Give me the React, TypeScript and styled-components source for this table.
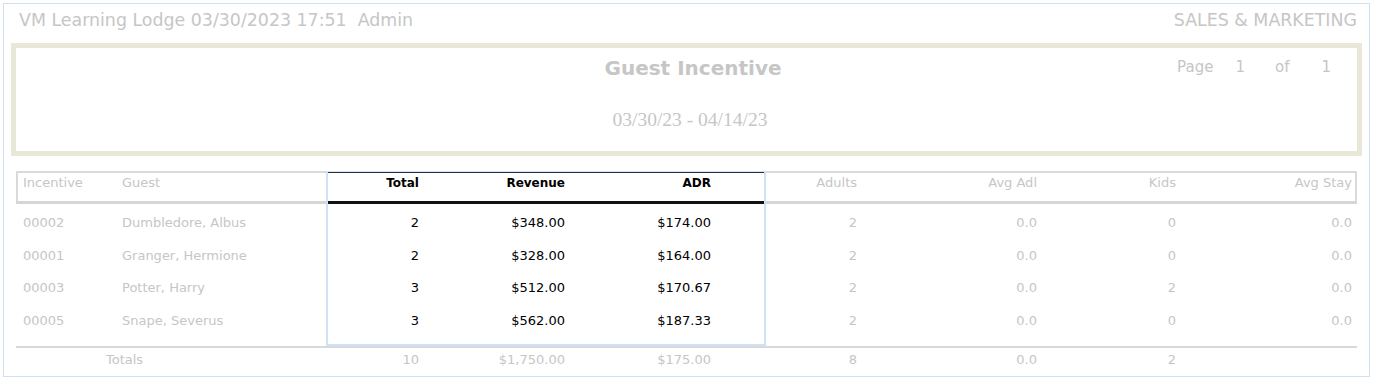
import React, { Fragment } from 'react';
import styled, { createGlobalStyle } from 'styled-components';

const GlobalStyle = createGlobalStyle`
  html, body {
    margin: 0;
    padding: 0;
    background: #ffffff;
  }
  body {
    font-family: "DejaVu Sans", Verdana, sans-serif;
  }
`;

const GRID = '99px 212px 146px 146px 146px 146px 180px 139px 1fr';
const GREY = '#c6c6c6';

type Align = 'left' | 'right';

type Column = {
  label: string;
  align: Align;
  hl?: boolean;
  pr?: number;
};

const columns: Column[] = [
  { label: 'Incentive', align: 'left' },
  { label: 'Guest', align: 'left' },
  { label: 'Total', align: 'right', hl: true },
  { label: 'Revenue', align: 'right', hl: true },
  { label: 'ADR', align: 'right', hl: true },
  { label: 'Adults', align: 'right' },
  { label: 'Avg Adl', align: 'right' },
  { label: 'Kids', align: 'right' },
  { label: 'Avg Stay', align: 'right', pr: 5 },
];

const rows: string[][] = [
  ['00002', 'Dumbledore, Albus', '2', '$348.00', '$174.00', '2', '0.0', '0', '0.0'],
  ['00001', 'Granger, Hermione', '2', '$328.00', '$164.00', '2', '0.0', '0', '0.0'],
  ['00003', 'Potter, Harry', '3', '$512.00', '$170.67', '2', '0.0', '2', '0.0'],
  ['00005', 'Snape, Severus', '3', '$562.00', '$187.33', '2', '0.0', '0', '0.0'],
];

const totals: string[] = ['10', '$1,750.00', '$175.00', '8', '0.0', '2', ''];

const Page = styled.div`
  margin: 3px;
  width: 1367px;
  height: 374px;
  box-sizing: border-box;
  border: 1px solid #cfe0f0;
  display: flex;
  flex-direction: column;
`;

const TopBar = styled.header`
  height: 39px;
  box-sizing: border-box;
  padding: 6px 12px 0 15px;
  display: flex;
  justify-content: space-between;
  align-items: flex-start;
  font-size: 17.4px;
  line-height: 20px;
  color: ${GREY};
  white-space: pre;
`;

const TitleBox = styled.section`
  margin: 0 7px;
  height: 113px;
  box-sizing: border-box;
  border: 5px solid #e9e7d7;
  display: grid;
  grid-template-columns: 527px 300px 1fr;
`;

const TitleBlock = styled.div`
  grid-column: 2;
  display: flex;
  flex-direction: column;
  align-items: center;
  padding-top: 8px;
  gap: 28px;
`;

const Title = styled.h1`
  margin: 0;
  font-size: 20px;
  line-height: 24px;
  font-weight: bold;
  color: ${GREY};
  white-space: nowrap;
`;

const Range = styled.div`
  font-family: "Liberation Serif", "Times New Roman", serif;
  font-size: 19.5px;
  line-height: 24px;
  color: ${GREY};
  white-space: nowrap;
  margin-left: -6px;
`;

const PageCount = styled.div`
  grid-column: 3;
  justify-self: end;
  display: flex;
  align-items: flex-start;
  padding: 9px 26px 0 0;
  font-size: 15px;
  line-height: 20px;
  color: ${GREY};
`;

const PageWord = styled.span<{ $gap: number }>`
  margin-left: ${p => p.$gap}px;
`;

const Table = styled.section`
  position: relative;
  margin: 15px 12px 0;
`;

const Row = styled.div<{ $head?: boolean }>`
  display: grid;
  grid-template-columns: ${GRID};
  height: ${p => (p.$head ? '33px' : '32.5px')};
  box-shadow: ${p => (p.$head ? 'inset 2px 2px 0 #dadada, inset -2px 0 0 #dadada' : 'none')};
`;

const Body = styled.div`
  padding: 3px 0 9px;
`;

const Cell = styled.div<{ $align: Align; $hl?: boolean; $pr?: number }>`
  display: flex;
  align-items: center;
  justify-content: ${p => (p.$align === 'right' ? 'flex-end' : 'flex-start')};
  padding: ${p => (p.$align === 'right' ? `0 ${p.$pr ?? 54}px 0 0` : '0 0 0 7px')};
  font-size: 13px;
  line-height: 16px;
  color: ${p => (p.$hl ? '#000000' : GREY)};
  white-space: nowrap;
`;

const HeadCell = styled(Cell)`
  align-items: flex-start;
  padding-top: 4px;
  border-bottom: 3px solid ${p => (p.$hl ? '#111111' : '#d6d6d6')};
  font-weight: ${p => (p.$hl ? 'bold' : 'normal')};
  font-size: ${p => (p.$hl ? '12px' : '13px')};
`;

const TotalsRow = styled.div`
  display: grid;
  grid-template-columns: ${GRID};
  height: 28px;
  border-top: 2px solid #d9d9d9;
`;

const TotalsCell = styled(Cell)`
  align-items: flex-start;
  padding-top: 4px;
`;

const TotalsLabel = styled(TotalsCell)`
  grid-column: span 2;
  padding-left: 90px;
`;

const Highlight = styled.div`
  position: absolute;
  left: 310px;
  top: 0;
  width: 440px;
  height: 175px;
  box-sizing: border-box;
  border: 2px solid #cde1f7;
  border-top-width: 1px;
  box-shadow: inset 0 1px 0 #2e2e3c;
  pointer-events: none;
`;

export default function App() {
  return (
    <Fragment>
      <GlobalStyle />
      <Page>
        <TopBar>
          <span>VM Learning Lodge 03/30/2023 17:51  Admin</span>
          <span>SALES &amp; MARKETING</span>
        </TopBar>

        <TitleBox>
          <TitleBlock>
            <Title>Guest Incentive</Title>
            <Range>03/30/23 - 04/14/23</Range>
          </TitleBlock>
          <PageCount>
            <span>Page</span>
            <PageWord $gap={22}>1</PageWord>
            <PageWord $gap={30}>of</PageWord>
            <PageWord $gap={32}>1</PageWord>
          </PageCount>
        </TitleBox>

        <Table>
          <Row $head>
            {columns.map(col => (
              <HeadCell key={col.label} $align={col.align} $hl={col.hl} $pr={col.pr}>
                {col.label}
              </HeadCell>
            ))}
          </Row>

          <Body>
            {rows.map((row, r) => (
              <Row key={`row-${r}`}>
                {row.map((value, c) => (
                  <Cell
                    key={`cell-${r}-${c}`}
                    $align={columns[c].align}
                    $hl={columns[c].hl}
                    $pr={columns[c].pr}
                  >
                    {value}
                  </Cell>
                ))}
              </Row>
            ))}
          </Body>

          <TotalsRow>
            <TotalsLabel $align="left">Totals</TotalsLabel>
            {totals.map((value, i) => (
              <TotalsCell key={`total-${i}`} $align="right" $pr={columns[i + 2].pr}>
                {value}
              </TotalsCell>
            ))}
          </TotalsRow>

          <Highlight />
        </Table>
      </Page>
    </Fragment>
  );
}
